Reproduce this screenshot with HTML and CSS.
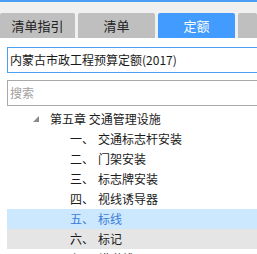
FILE: index.html
```html
<!DOCTYPE html>
<html lang="zh-CN">
<head>
    <meta charset="UTF-8">
    <meta name="viewport" content="width=device-width, initial-scale=1.0">
    <title>定额</title>
    <link rel="stylesheet" href="styles.css">
</head>
<body>
    <div class="topline"></div>
    <div class="tabbar">
        <div class="tab tab-first">清单指引</div>
        <div class="tab">清单</div>
        <div class="tab active">定额</div>
        <div class="tab tab-last"></div>
    </div>

    <div class="panel">
        <div class="field selected">内蒙古市政工程预算定额(2017)</div>
        <div class="field search">搜索</div>

        <ul class="tree">
            <li class="row chapter">
                <svg class="arrow" width="7" height="7" viewBox="0 0 7 7"><polygon points="6,0 6,6 0,6" fill="#8a8a8a"/></svg>
                <span>第五章 交通管理设施</span>
            </li>
            <li class="row item"><span class="num">一、</span><span>交通标志杆安装</span></li>
            <li class="row item"><span class="num">二、</span><span>门架安装</span></li>
            <li class="row item"><span class="num">三、</span><span>标志牌安装</span></li>
            <li class="row item"><span class="num">四、</span><span>视线诱导器</span></li>
            <li class="row item current"><span class="num">五、</span><span>标线</span></li>
            <li class="row item hover"><span class="num">六、</span><span>标记</span></li>
            <li class="row item"><span class="num">七、</span><span>横道线</span></li>
        </ul>
    </div>
</body>
</html>
```

FILE: styles.css
```css
body {
    margin: 0;
    width: 257px;
    height: 254px;
    overflow: hidden;
    background: #fff;
    font-family: "Noto Sans CJK SC", "Noto Sans", sans-serif;
    font-size: 12px;
    color: #1a1a1a;
}
.topline {
    height: 2px;
    background: #4a9ff5;
}
.tabbar {
    display: flex;
    gap: 3px;
    background: #f0f0f0;
    padding-top: 11px;
}
.tab {
    width: 77px;
    height: 25px;
    line-height: 25px;
    text-align: center;
    font-size: 13px;
    background: #bfbfbf;
    color: #222;
    border-radius: 2px 2px 0 0;
}
.tab-first {
    width: 75px;
}
.tab-last {
    flex: 1;
}
.tab.active {
    background: #429bff;
    color: #fff;
}
.panel {
    padding: 9px 0 0 7px;
}
.field {
    height: 24px;
    line-height: 24px;
    padding-left: 2px;
    border: 1px solid #a9a9a9;
    border-right: none;
}
.field.selected {
    border-color: #4a9ff5;
}
.field.search {
    margin-top: 7px;
    color: #a0a0a0;
}
.tree {
    list-style: none;
    margin: 3px 0 0 0;
    padding: 0;
}
.row {
    height: 20px;
    line-height: 20px;
    display: flex;
    align-items: center;
    white-space: nowrap;
}
.chapter {
    padding-left: 26px;
}
.chapter .arrow {
    margin-right: 10px;
}
.item {
    padding-left: 63px;
}
.item .num {
    width: 28px;
}
.current {
    background: #cce8ff;
    color: #3b7bd4;
}
.hover {
    background: #e5e5e5;
}
```
